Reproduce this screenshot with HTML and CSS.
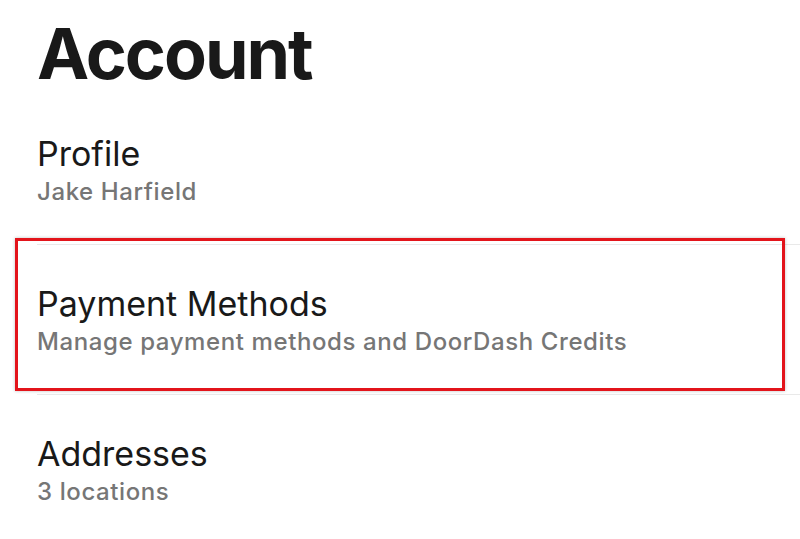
FILE: index.html
```html
<!DOCTYPE html>
<html lang="en">
<head>
<meta charset="utf-8">
<title>Account</title>
<link rel="stylesheet" href="styles.css">
</head>
<body>
<main class="page">
  <h1 class="page-title">Account</h1>
  <ul class="settings-list">
    <li class="settings-row">
      <div class="row-title">Profile</div>
      <div class="row-subtitle">Jake Harfield</div>
    </li>
    <li class="settings-row is-highlighted">
      <div class="row-title">Payment Methods</div>
      <div class="row-subtitle">Manage payment methods and DoorDash Credits</div>
    </li>
    <li class="settings-row">
      <div class="row-title">Addresses</div>
      <div class="row-subtitle">3 locations</div>
    </li>
  </ul>
</main>
</body>
</html>
```

FILE: styles.css
```css
html, body {
  margin: 0;
  padding: 0;
  background: #ffffff;
}

body {
  font-family: Inter, "Liberation Sans", sans-serif;
  color: #191919;
}

.page {
  padding-left: 37px;
}

.page-title {
  margin: 18px 0 5px 0;
  font-size: 70px;
  line-height: 72px;
  font-weight: 700;
  letter-spacing: -2px;
  color: #191919;
}

.settings-list {
  list-style: none;
  margin: 0;
  padding: 0;
}

.settings-row {
  position: relative;
  padding: 39px 0 36px 0;
}

.settings-row + .settings-row {
  border-top: 1px solid #e9e9e9;
}

.row-title {
  font-size: 34px;
  line-height: 40px;
  font-weight: 400;
  color: #191919;
}

.row-subtitle {
  margin-top: 2px;
  font-size: 24px;
  line-height: 32px;
  font-weight: 500;
  letter-spacing: 0.6px;
  color: #767676;
}

.is-highlighted::after {
  content: "";
  position: absolute;
  top: -7px;
  bottom: 3px;
  left: -22px;
  right: 15px;
  border: 3px solid #e3141b;
  box-shadow: 0 0 3px rgba(0, 0, 0, 0.25);
  pointer-events: none;
}
```
